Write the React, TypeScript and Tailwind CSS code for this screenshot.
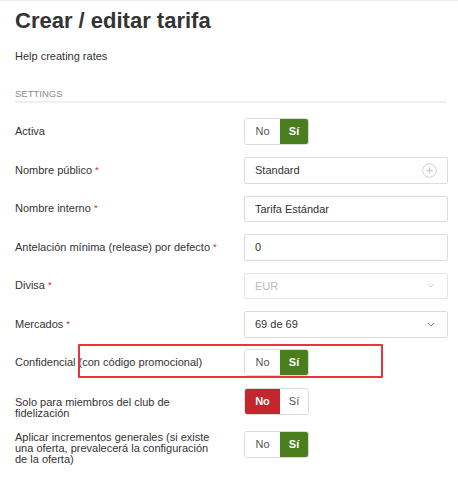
import { ReactNode } from 'react';

type ToggleProps = { value: boolean };

// Two-segment No / Sí switch used across the settings form
const YesNo = ({ value }: ToggleProps) => (
  <div className="flex h-[27px] w-[65px] overflow-hidden rounded-[3px] border border-[#dcdcdc] text-[11px]">
    <span
      className={
        value
          ? 'flex w-[35px] items-center justify-center bg-white text-[#555]'
          : 'flex w-[35px] items-center justify-center bg-[#c1272d] font-bold text-white'
      }
    >
      No
    </span>
    <span
      className={
        value
          ? 'flex flex-1 items-center justify-center bg-[#4a7d1e] font-bold text-white'
          : 'flex flex-1 items-center justify-center bg-white text-[#555]'
      }
    >
      Sí
    </span>
  </div>
);

const Req = () => (
  <>
    {' '}
    <span className="relative top-[-1px] text-[9.5px] text-[#c9302c]">*</span>
  </>
);

const Field = ({ children, disabled, icon }: { children: ReactNode; disabled?: boolean; icon?: ReactNode }) => (
  <div
    className={
      disabled
        ? 'flex h-[26.5px] w-[204px] items-center justify-between rounded-[2px] border border-[#e6e6e6] pl-[10px] pr-[10px] text-[11px] text-[#bbb]'
        : 'flex h-[26.5px] w-[204px] items-center justify-between rounded-[2px] border border-[#dcdcdc] pl-[10px] pr-[10px] text-[11px] text-[#333]'
    }
  >
    <span>{children}</span>
    {icon}
  </div>
);

const Chevron = ({ light }: { light?: boolean }) => (
  <svg width="8" height="5" viewBox="0 0 8 5" fill="none" className="mr-[2px]">
    <path d="M1 1l3 3 3-3" stroke={light ? '#c8c8c8' : '#8a8a8a'} strokeWidth="1" />
  </svg>
);

const PlusCircle = () => (
  <svg width="15" height="15" viewBox="0 0 15 15" fill="none">
    <circle cx="7.5" cy="7.5" r="6.8" stroke="#cfcfcf" strokeWidth="1" />
    <path d="M7.5 4.3v6.4M4.3 7.5h6.4" stroke="#cfcfcf" strokeWidth="1.4" />
  </svg>
);

const Row = ({ label, children }: { label: ReactNode; children: ReactNode }) => (
  <div className="grid grid-cols-[229px_204px] items-center">
    <div className="w-[205px] text-[11px] leading-[13px] text-[#333]">{label}</div>
    {children}
  </div>
);

export default function App() {
  return (
    <div className="h-[490px] w-[458px] overflow-hidden border-t border-[#eeeeee] bg-white pl-[15px] pr-[11px] font-['Liberation_Sans',Arial,sans-serif] text-[#333]">
      <h1 className="mt-[9px] text-[22px] font-bold leading-[22px] text-[#333]">Crear / editar tarifa</h1>
      <p className="mt-[18px] text-[11px] leading-[13px]">Help creating rates</p>
      <div className="mt-[25px] border-b-2 border-[#efefef] pb-[1px] text-[9.5px] leading-[12px] text-[#8c8c8c]">
        SETTINGS
      </div>

      <div className="mt-[15px] flex flex-col gap-[12px]">
        <Row label="Activa">
          <YesNo value />
        </Row>
        <Row label={<>Nombre público<Req /></>}>
          <Field icon={<PlusCircle />}>Standard</Field>
        </Row>
        <Row label={<>Nombre interno<Req /></>}>
          <Field>Tarifa Estándar</Field>
        </Row>
        <Row label={<>Antelación mínima (release) por defecto<Req /></>}>
          <Field>0</Field>
        </Row>
        <Row label={<>Divisa<Req /></>}>
          <Field disabled icon={<Chevron light />}>EUR</Field>
        </Row>
        <Row label={<>Mercados<Req /></>}>
          <Field icon={<Chevron />}>69 de 69</Field>
        </Row>
        <div className="relative -mt-[1px]">
          <Row label="Confidencial (con código promocional)">
            <YesNo value />
          </Row>
          {/* highlight frame around the promo-code switch */}
          <div className="absolute left-[63px] top-[-5px] h-[34px] w-[305px] rounded-[1px] border-2 border-[#e8343f]" />
        </div>
        <div className="grid grid-cols-[229px_204px] items-start">
          <div className="w-[205px] pt-[9px] text-[11px] leading-[11px]">
            Solo para miembros del club de fidelización
          </div>
          <YesNo value={false} />
        </div>
        <div className="grid grid-cols-[229px_204px] items-start">
          <div className="w-[205px] pt-[1px] text-[11px] leading-[11px]">
            Aplicar incrementos generales (si existe una oferta, prevalecerá la configuración de la oferta)
          </div>
          <YesNo value />
        </div>
      </div>
    </div>
  );
}
